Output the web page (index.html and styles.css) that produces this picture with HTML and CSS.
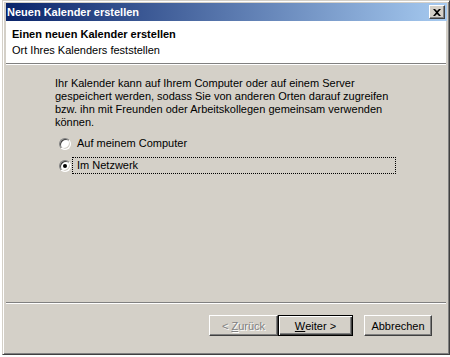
FILE: index.html
```html
<!DOCTYPE html>
<html lang="de">
<head>
<meta charset="utf-8">
<title>Neuen Kalender erstellen</title>
<link rel="stylesheet" href="styles.css">
</head>
<body>
<div class="window">
  <div class="titlebar">
    <span class="title">Neuen Kalender erstellen</span>
    <span class="close"><svg width="8" height="7" viewBox="0 0 8 7"><path d="M0 0h2l2 2 2-2h2L5 3.5 8 7H6L4 5 2 7H0l3-3.5z" fill="#000"/></svg></span>
  </div>
  <div class="header">
    <div class="h-title">Einen neuen Kalender erstellen</div>
    <div class="h-sub">Ort Ihres Kalenders feststellen</div>
  </div>
  <div class="body">
    <p class="desc">Ihr Kalender kann auf Ihrem Computer oder auf einem Server<br>gespeichert werden, sodass Sie von anderen Orten darauf zugreifen<br>bzw. ihn mit Freunden oder Arbeitskollegen gemeinsam verwenden<br>können.</p>
    <div class="options">
      <div class="option">
        <span class="radio"></span>
        <span class="label">Auf meinem Computer</span>
      </div>
      <div class="option">
        <span class="radio checked"></span>
        <span class="label focus">Im Netzwerk</span>
      </div>
    </div>
  </div>
  <div class="footer">
    <div class="buttons">
      <span class="btn disabled back">&lt;&nbsp;<u>Z</u>urück</span>
      <span class="btn default next"><u>W</u>eiter&nbsp;&gt;</span>
      <span class="btn cancel">Abbrechen</span>
    </div>
  </div>
</div>
</body>
</html>
```
FILE: styles.css
```css
* { box-sizing: border-box; }
html, body { margin: 0; padding: 0; }
body {
  width: 450px;
  height: 357px;
  background: #ffffff;
  font-family: "Liberation Sans", Arial, sans-serif;
  font-size: 11px;
  color: #000;
  overflow: hidden;
}
.window {
  margin-left: 2px;
  width: 448px;
  height: 355px;
  background: #d4d0c8;
  border: 1px solid;
  border-color: #d4d0c8 #404040 #404040 #d4d0c8;
  box-shadow: inset 1px 1px 0 #ffffff, inset -1px -1px 0 #808080;
  padding: 2px 2px 2px 3px;
  display: flex;
  flex-direction: column;
}
.titlebar {
  height: 18px;
  background: linear-gradient(to right, #0a246a, #a6caf0);
  display: flex;
  align-items: center;
  justify-content: space-between;
  padding: 0 2px 0 1px;
}
.title {
  color: #fff;
  font-weight: bold;
  font-size: 11px;
}
.close {
  width: 16px;
  height: 14px;
  background: #d4d0c8;
  border: 1px solid;
  border-color: #ffffff #404040 #404040 #ffffff;
  box-shadow: inset -1px -1px 0 #808080;
  display: flex;
  align-items: center;
  justify-content: center;
  padding-right: 1px;
}
.close svg { display: block; }
.header {
  height: 43px;
  background: #fff;
  border-bottom: 1px solid #808080;
  box-shadow: 0 1px 0 #ffffff;
  padding: 6px 0 0 6px;
  margin-right: 1px;
}
.h-title {
  font-weight: bold;
  line-height: 14px;
}
.h-sub {
  margin-top: 2px;
  line-height: 14px;
}
.body {
  flex: 1;
  padding: 13px 0 0 49px;
}
.desc {
  margin: 0;
  line-height: 13px;
  white-space: nowrap;
}
.options {
  margin-top: 6px;
  display: flex;
  flex-direction: column;
  gap: 5px;
}
.option {
  display: flex;
  align-items: center;
  height: 17px;
  padding-left: 4px;
}
.radio {
  width: 12px;
  height: 12px;
  border-radius: 50%;
  background: #fff;
  border: 1px solid;
  border-color: #808080 #ffffff #ffffff #808080;
  box-shadow: inset 1px 1px 0 #404040, inset -1px -1px 0 #d4d0c8;
  position: relative;
  flex: none;
}
.radio.checked::after {
  content: "";
  position: absolute;
  left: 3px;
  top: 3px;
  width: 4px;
  height: 4px;
  border-radius: 50%;
  background: #000;
}
.label {
  margin-left: 1px;
  padding: 0 0 0 4px;
  height: 17px;
  line-height: 15px;
  border: 1px dotted transparent;
}
.label.focus {
  border-color: #000;
  width: 324px;
}
.footer {
  height: 50px;
  border-top: 1px solid #808080;
  box-shadow: inset 0 1px 0 #ffffff;
  margin-right: 1px;
  padding: 12px 14px 0 0;
}
.buttons {
  display: flex;
  justify-content: flex-end;
}
.btn {
  height: 21px;
  width: 69px;
  display: flex;
  align-items: center;
  justify-content: center;
  background: #d4d0c8;
  border: 1px solid;
  border-color: #ffffff #404040 #404040 #ffffff;
  box-shadow: inset -1px -1px 0 #808080;
}
.btn.disabled {
  color: #808080;
  text-shadow: 1px 1px 0 #fff;
}
.btn.default {
  width: 75px;
  border: 1px solid #000;
  box-shadow: inset 1px 1px 0 #fff, inset -1px -1px 0 #404040, inset -2px -2px 0 #808080;
}
.btn.cancel {
  margin-left: 11px;
  width: 68px;
}
u { text-decoration: underline; }
```
